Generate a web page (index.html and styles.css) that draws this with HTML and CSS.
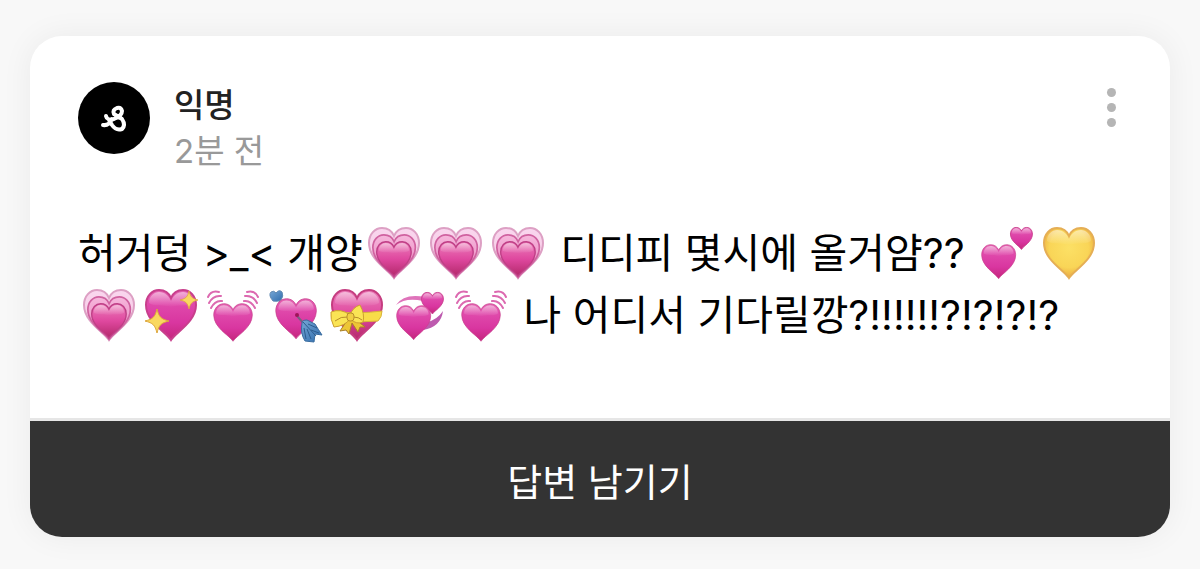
FILE: index.html
```
<!DOCTYPE html>
<html lang="ko">
<head>
  <meta charset="UTF-8">
  <meta name="viewport" content="width=device-width, initial-scale=1.0">
  <title>익명 질문</title>
  <link rel="stylesheet" href="styles.css">
</head>
<body>
  <!-- Shared heart shapes and fills -->
  <svg class="defs" aria-hidden="true">
    <defs>
      <linearGradient id="pink" x1="0" y1="0" x2="0" y2="1">
        <stop offset="0" stop-color="#e565b2"/>
        <stop offset=".25" stop-color="#e04bac"/>
        <stop offset=".65" stop-color="#d936a0"/>
        <stop offset="1" stop-color="#c4267c"/>
      </linearGradient>
      <linearGradient id="rose" x1="0" y1="0" x2="0" y2="1">
        <stop offset="0" stop-color="#ec7fba"/>
        <stop offset=".5" stop-color="#df489f"/>
        <stop offset="1" stop-color="#b3286a"/>
      </linearGradient>
      <linearGradient id="shine" x1="0" y1="0" x2="0" y2="1">
        <stop offset="0" stop-color="#fff" stop-opacity=".5"/>
        <stop offset="1" stop-color="#fff" stop-opacity="0"/>
      </linearGradient>
      <linearGradient id="outer" x1="0" y1="0" x2="0" y2="1">
        <stop offset="0" stop-color="#f9d6ee"/>
        <stop offset=".5" stop-color="#f8cfe8"/>
        <stop offset="1" stop-color="#dd7aac"/>
      </linearGradient>
      <linearGradient id="middle" x1="0" y1="0" x2="0" y2="1">
        <stop offset="0" stop-color="#f6b7dc"/>
        <stop offset=".5" stop-color="#ef9acb"/>
        <stop offset="1" stop-color="#c64585"/>
      </linearGradient>
      <radialGradient id="gold" cx=".5" cy=".4" r=".65">
        <stop offset="0" stop-color="#fce065"/>
        <stop offset=".6" stop-color="#f9d557"/>
        <stop offset="1" stop-color="#e79f3a"/>
      </radialGradient>
      <linearGradient id="blue" x1="0" y1="0" x2="1" y2="1">
        <stop offset="0" stop-color="#76a7d6"/>
        <stop offset="1" stop-color="#2f6cac"/>
      </linearGradient>

      <path id="heart" d="M26 51C21 43 1 33 1 16C1 7 7 1 14 1C20 1 24 4 26 9C28 4 32 1 38 1C45 1 51 7 51 16C51 33 31 43 26 51Z"/>
      <path id="gloss" d="M4 14C4 7 9 3 14 3C20 3 24 7 26 12C28 7 32 3 38 3C43 3 48 7 48 14C42 18 34 15 26 18C18 15 10 18 4 14Z"/>
      <path id="star" d="M0-12C2-4 4-2 12 0C4 2 2 4 0 12C-2 4-4 2-12 0C-4-2-2-4 0-12Z"/>

      <symbol id="growing" viewBox="0 0 62 62">
        <g transform="translate(5 5)">
          <use href="#heart" fill="url(#outer)" stroke="#dda0c4" stroke-width="2"/>
          <use href="#heart" transform="translate(4 7) scale(.85)" fill="url(#middle)" stroke="#d062a0" stroke-width="2"/>
          <use href="#heart" transform="translate(8 14) scale(.69)" fill="url(#rose)" stroke="#bf3f86" stroke-width="2"/>
          <use href="#gloss" transform="translate(8 14) scale(.69)" fill="url(#shine)"/>
        </g>
      </symbol>

      <symbol id="sparkling" viewBox="0 0 62 62">
        <g transform="translate(5 5)">
          <use href="#heart" fill="url(#pink)" stroke="#c83f8c" stroke-width="2"/>
          <use href="#gloss" fill="url(#shine)"/>
          <use href="#star" transform="translate(12 32)" fill="#f9d860" stroke="#dda63c"/>
          <use href="#star" transform="translate(44 11) scale(.75)" fill="#f9d860" stroke="#dda63c"/>
        </g>
      </symbol>

      <symbol id="beating" viewBox="0 0 62 62">
        <g transform="translate(11 19) scale(.77 .75)">
          <use href="#heart" fill="url(#pink)" stroke="#c83f8c"/>
          <use href="#gloss" fill="url(#shine)"/>
        </g>
        <g fill="none" stroke="#dc69b0" stroke-width="2" stroke-linecap="round">
          <path d="M6 13Q9 6 17 8M7 19Q11 11 19 12M9 24Q13 16 20 17"/>
          <path d="M56 13Q53 6 45 8M55 19Q51 11 43 12M53 24Q49 16 42 17"/>
        </g>
      </symbol>

      <symbol id="arrow" viewBox="0 0 62 62">
        <path d="M12 13L20 22" stroke="#648db5" stroke-width="2"/>
        <path d="M9 17Q4 11 7 8Q10 6 12 9Q15 5 18 8Q20 12 17 16Q13 18 9 17Z" fill="url(#blue)" stroke="#6089b2"/>
        <g transform="translate(11 14) scale(.81 .8)">
          <use href="#heart" fill="url(#pink)" stroke="#c83f8c"/>
          <use href="#gloss" fill="url(#shine)"/>
        </g>
        <path d="M33 32L42 42" stroke="#75627f" stroke-width="2"/>
        <circle cx="33" cy="31" r="2" fill="#a01459"/>
        <path d="M38 39Q38 36 43 36L51 40Q54 45 58 51L51 50L50 58L41 57Q36 49 38 39Z" fill="url(#blue)" stroke="#396c9f"/>
        <path d="M39 38L52 52M40 44L42 55M43 45L47 55M44 40L53 44M47 46L55 49" fill="none" stroke="#2d5c8e"/>
      </symbol>

      <symbol id="ribbon" viewBox="0 0 62 62">
        <g transform="translate(5 5)">
          <use href="#heart" fill="url(#rose)" stroke="#c53d80" stroke-width="2"/>
          <use href="#gloss" fill="url(#shine)"/>
          <path d="M1 23Q28 25 51 22Q51 28 47 32Q28 34 6 32Z" fill="#f8dc49" stroke="#d9b33a"/>
          <path d="M17 30L9 42L15 41L18 45L21 34L27 43L29 38L34 38L23 29Z" fill="#edc636" stroke="#a98027"/>
          <path d="M19 26Q10 19 0 23Q-1 30 3 38Q14 37 19 30Q26 36 32 33Q34 25 29 16Q22 18 19 26Z" fill="#fae455" stroke="#cda030"/>
          <path d="M4 32Q10 27 17 28M22 28Q28 28 31 31" fill="none" stroke="#b78d2a"/>
          <rect x="16" y="24" width="7" height="8" rx="3" fill="#f2cf44" stroke="#b98f2b"/>
        </g>
      </symbol>

      <symbol id="revolving" viewBox="0 0 62 62">
        <path d="M8 21Q16 9 37 13L35 17Q18 13 8 21Z" fill="#df73ba"/>
        <path d="M55 27Q53 43 35 46L39 38Q49 36 55 27Z" fill="#bd5aae"/>
        <g transform="translate(33 8) scale(.44 .43)">
          <use href="#heart" fill="url(#pink)" stroke="#c83f8c" stroke-width="2"/>
          <use href="#gloss" fill="url(#shine)"/>
        </g>
        <g transform="translate(8 21) scale(.68)">
          <use href="#heart" fill="url(#pink)" stroke="#c83f8c"/>
          <use href="#gloss" fill="url(#shine)"/>
        </g>
      </symbol>

      <symbol id="two" viewBox="0 0 62 62">
        <g transform="translate(34 5) scale(.44)">
          <use href="#heart" fill="url(#pink)" stroke="#c83f8c" stroke-width="2"/>
          <use href="#gloss" fill="url(#shine)"/>
        </g>
        <g transform="translate(5 22) scale(.68)">
          <use href="#heart" fill="url(#pink)" stroke="#c83f8c"/>
          <use href="#gloss" fill="url(#shine)"/>
        </g>
      </symbol>

      <symbol id="yellow" viewBox="0 0 62 62">
        <g transform="translate(5 5)">
          <use href="#heart" fill="url(#gold)" stroke="#e5ae55" stroke-width="2"/>
          <use href="#gloss" fill="url(#shine)"/>
        </g>
      </symbol>
    </defs>
  </svg>

  <article class="card">
    <header class="card-header">
      <svg class="avatar" viewBox="0 0 72 72" aria-hidden="true">
        <circle cx="36" cy="36" r="36" fill="#000"/>
        <path d="M28 34Q29 39 36 37Q44 34 44 29Q43 25 39 26Q34 28 36 32L44 37Q48 43 44 47Q38 49 34 43L31 38M25 43Q31 44 34 37" fill="none" stroke="#fff" stroke-width="4" stroke-linecap="round" stroke-linejoin="round"/>
      </svg>
      <div class="author">
        <strong class="name">익명</strong>
        <time class="time">2분 전</time>
      </div>
      <button class="more" type="button" aria-label="더보기">
        <span class="dot"></span>
        <span class="dot"></span>
        <span class="dot"></span>
      </button>
    </header>

    <p class="message">허거덩 &gt;_&lt; 개양<svg class="emoji" role="img" aria-label="커지는 하트"><use href="#growing"/></svg><svg class="emoji" role="img" aria-label="커지는 하트"><use href="#growing"/></svg><svg class="emoji" role="img" aria-label="커지는 하트"><use href="#growing"/></svg> 디디피 몇시에 올거얌?? <svg class="emoji" role="img" aria-label="두 개의 하트"><use href="#two"/></svg><svg class="emoji" role="img" aria-label="노란 하트"><use href="#yellow"/></svg><svg class="emoji" role="img" aria-label="커지는 하트"><use href="#growing"/></svg><svg class="emoji" role="img" aria-label="반짝이는 하트"><use href="#sparkling"/></svg><svg class="emoji" role="img" aria-label="뛰는 하트"><use href="#beating"/></svg><svg class="emoji" role="img" aria-label="화살 맞은 하트"><use href="#arrow"/></svg><svg class="emoji" role="img" aria-label="리본 하트"><use href="#ribbon"/></svg><svg class="emoji" role="img" aria-label="도는 하트"><use href="#revolving"/></svg><svg class="emoji" role="img" aria-label="뛰는 하트"><use href="#beating"/></svg> 나 어디서 기다릴깡?!!!!!!?!?!?!?</p>

    <button class="reply" type="button">답변 남기기</button>
  </article>
</body>
</html>
```
FILE: styles.css
```
* {
  box-sizing: border-box;
}

body {
  margin: 0;
  padding: 36px 30px 32px;
  background: #f8f8f8;
  color: #000;
  font-family: Inter, "Noto Sans CJK KR", sans-serif;
}

.defs {
  position: absolute;
  width: 0;
  height: 0;
}

.card {
  overflow: hidden;
  border-radius: 32px;
  background: #fff;
  box-shadow: 0 0 32px rgba(0, 0, 0, 0.06);
}

/* Author row */
.card-header {
  display: flex;
  align-items: flex-start;
  padding: 46px 48px 0;
}

.avatar {
  width: 72px;
  height: 72px;
}

.author {
  display: flex;
  flex-direction: column;
  flex: 1;
  margin-left: 24px;
}

.name,
.time {
  font-size: 33px;
  line-height: 46px;
}

.name {
  color: #222;
  font-weight: 500;
}

.time {
  color: #999;
}

.more {
  display: flex;
  flex-direction: column;
  gap: 6px;
  padding: 6px;
  border: 0;
  background: none;
  cursor: pointer;
}

.dot {
  width: 9px;
  height: 9px;
  border-radius: 50%;
  background: #b5b5b5;
}

/* Message text */
.message {
  margin: 0;
  padding: 48px 48px 72px;
  font-size: 41px;
  line-height: 62px;
}

.emoji {
  width: 62px;
  height: 62px;
  vertical-align: top;
}

.reply {
  display: block;
  width: 100%;
  height: 119px;
  border: 0;
  border-top: 3px solid #e6e6e6;
  background: #333;
  color: #fff;
  font-family: inherit;
  font-size: 38px;
  cursor: pointer;
}
```
